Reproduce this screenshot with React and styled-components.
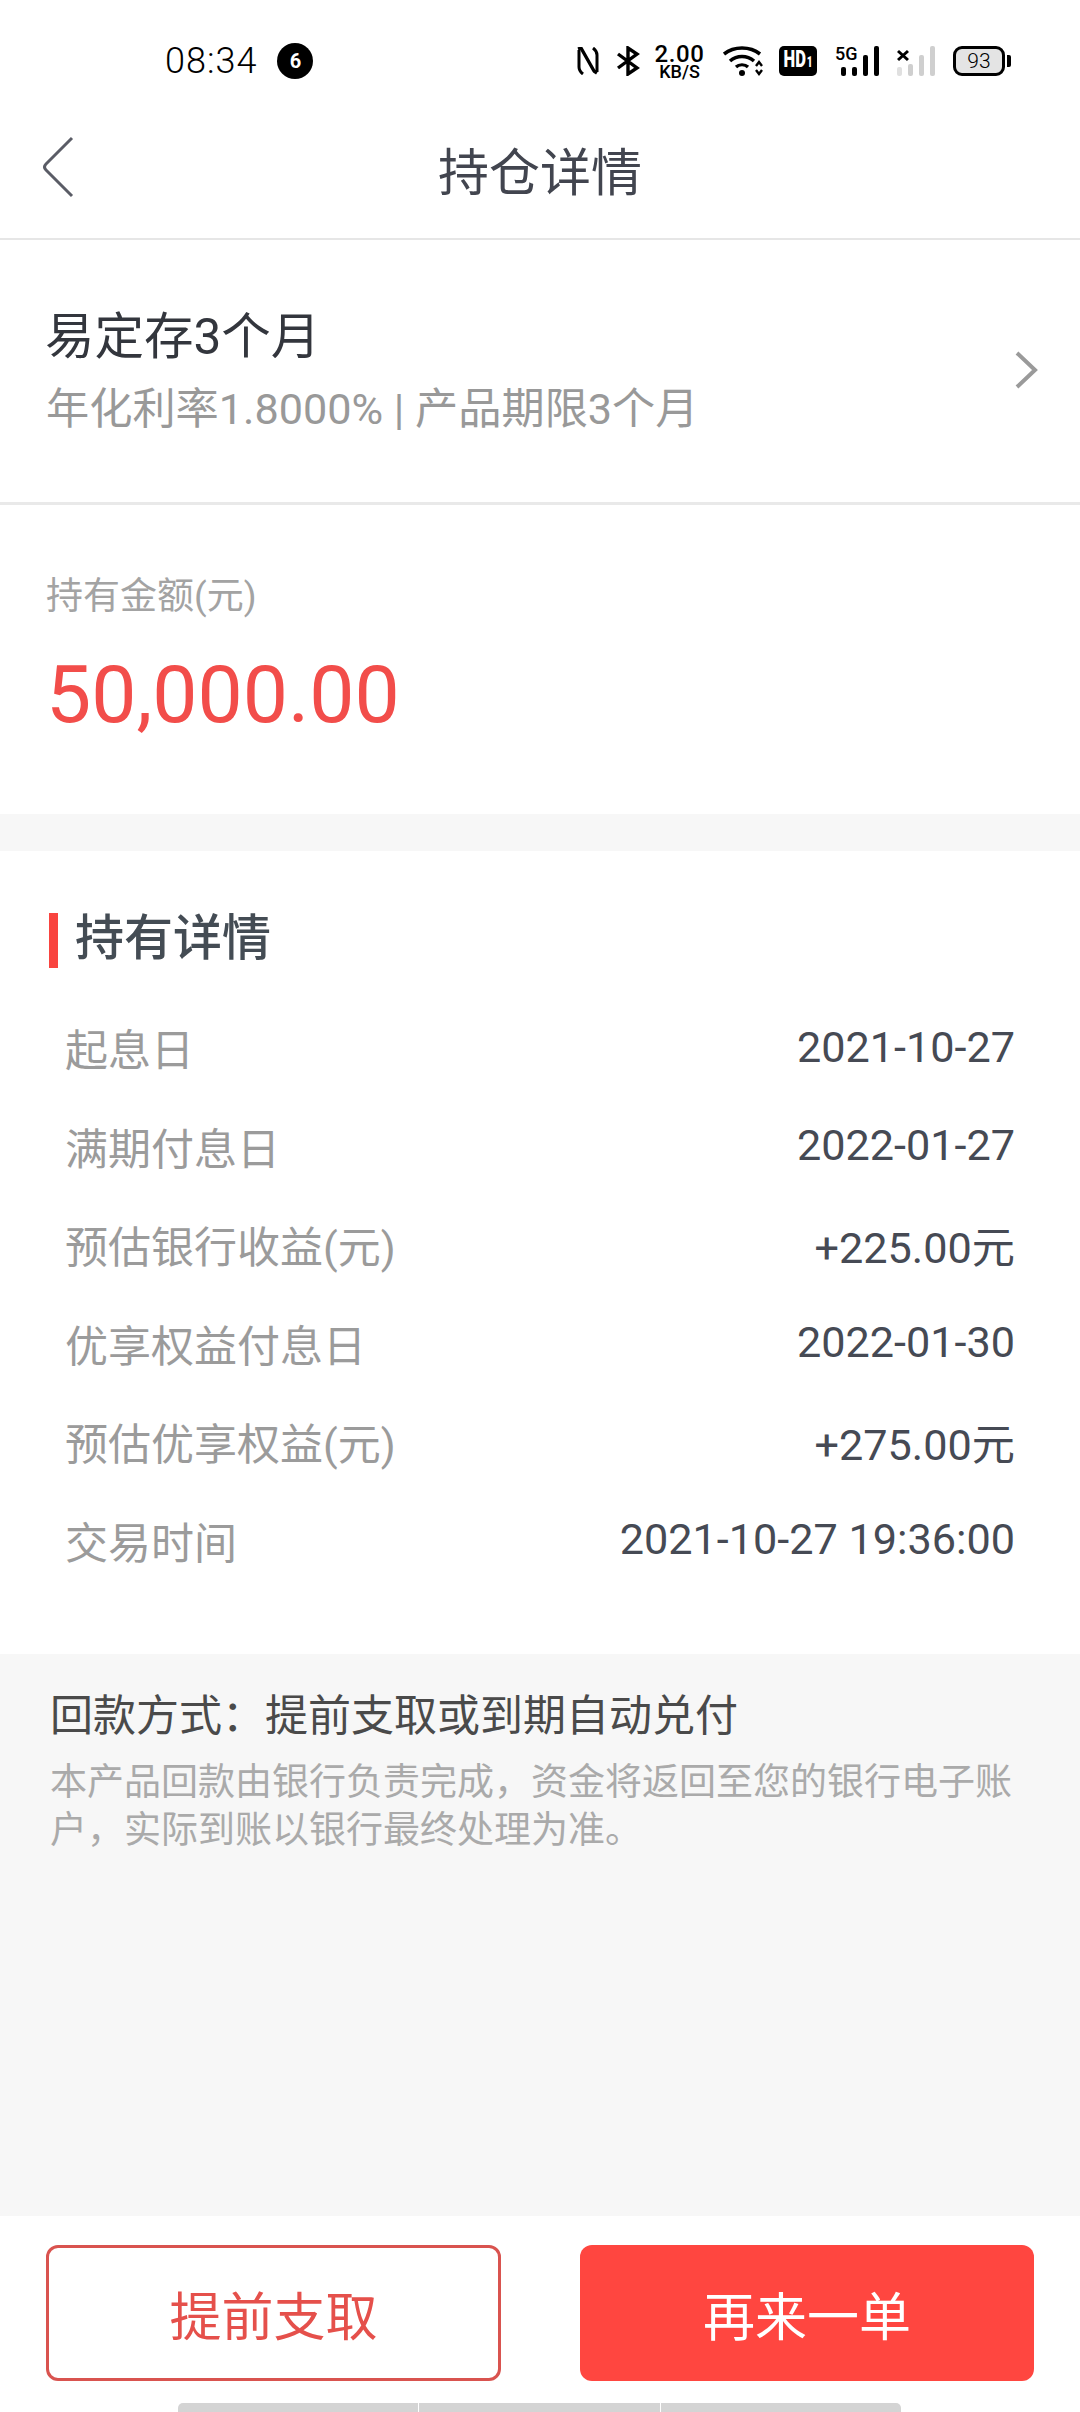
import React from 'react';
import styled, { createGlobalStyle } from 'styled-components';

const GlobalStyle = createGlobalStyle`
  html, body {
    margin: 0;
    padding: 0;
    background: #fff;
  }
  * {
    box-sizing: border-box;
  }
`;

const Page = styled.div`
  width: 1080px;
  height: 2412px;
  display: flex;
  flex-direction: column;
  background: #f7f7f7;
  font-family: Roboto, "Noto Sans CJK SC", sans-serif;
  overflow: hidden;
`;

const StatusBar = styled.div`
  height: 100px;
  flex: none;
  background: #fff;
  display: flex;
  align-items: center;
  padding: 22px 75px 0 165px;
  color: #000;
`;

const Clock = styled.span`
  font-size: 36px;
  font-weight: 300;
  letter-spacing: 1px;
  line-height: 1;
`;

const Badge = styled.span`
  width: 36px;
  height: 36px;
  margin-left: 20px;
  border-radius: 50%;
  background: #000;
  color: #fff;
  font-size: 20px;
  font-weight: 700;
  display: flex;
  align-items: center;
  justify-content: center;
`;

const StatusIcons = styled.div`
  margin-left: auto;
  display: flex;
  align-items: center;
`;

const NetSpeed = styled.div`
  width: 51px;
  margin: 0 18px 0 14px;
  display: flex;
  flex-direction: column;
  align-items: center;
  b {
    font-size: 24px;
    font-weight: 500;
    letter-spacing: 0.6px;
    line-height: 20px;
  }
  span {
    font-size: 18px;
    font-weight: 500;
    line-height: 15px;
  }
`;

const HdTag = styled.div`
  width: 38px;
  height: 30px;
  margin: 0 18px 0 16px;
  border-radius: 5px;
  background: #000;
  color: #fff;
  display: flex;
  align-items: center;
  justify-content: center;
  overflow: hidden;
`;

const HdText = styled.span`
  display: block;
  font-size: 23px;
  font-weight: 900;
  line-height: 30px;
  white-space: nowrap;
  transform: scaleX(0.72);
  small {
    font-size: 14px;
    margin-left: 1px;
  }
`;

const SignalWrap = styled.div`
  position: relative;
  width: ${(p) => p.$width}px;
  height: 30px;
  margin-right: 18px;
`;

const SignalLabel = styled.span`
  position: absolute;
  left: 0;
  top: -1px;
  font-size: 18px;
  font-weight: 500;
  line-height: 1;
`;

const Battery = styled.div`
  width: 52px;
  height: 30px;
  border: 3px solid #000;
  border-radius: 9px;
  background: #e4e4e4;
  font-size: 21px;
  font-weight: 300;
  display: flex;
  align-items: center;
  justify-content: center;
  position: relative;
  &::after {
    content: '';
    position: absolute;
    right: -9px;
    top: 6px;
    width: 4px;
    height: 12px;
    border-radius: 0 2px 2px 0;
    background: #000;
  }
`;

const NavBar = styled.div`
  position: relative;
  height: 140px;
  flex: none;
  background: #fff;
  border-bottom: 2px solid #e6e6e6;
  display: flex;
  align-items: center;
  justify-content: center;
`;

const BackIcon = styled.svg`
  position: absolute;
  left: 40px;
  top: 36px;
  width: 40px;
  height: 66px;
`;

const NavTitle = styled.h1`
  margin: 0;
  font-size: 51px;
  font-weight: 400;
  color: #42454f;
`;

const Product = styled.div`
  height: 265px;
  flex: none;
  background: #fff;
  border-bottom: 3px solid #e9e9e9;
  padding: 67px 40px 0 45px;
  display: flex;
  justify-content: space-between;
`;

const ProductName = styled.div`
  font-size: 49.5px;
  line-height: 60px;
  color: #33363d;
`;

const ProductMeta = styled.div`
  font-size: 43.2px;
  line-height: 60px;
  margin-top: 13px;
  margin-left: 1px;
  color: #999;
`;

const ChevronIcon = styled.svg`
  width: 26px;
  height: 40px;
  margin-top: 43px;
`;

const Holding = styled.div`
  height: 309px;
  flex: none;
  background: #fff;
  padding: 68px 46px 0;
`;

const HoldingLabel = styled.div`
  font-size: 37px;
  line-height: 48px;
  color: #a3a3a3;
`;

const HoldingValue = styled.div`
  margin-top: 24px;
  font-size: 80.5px;
  line-height: 100px;
  color: #f24d4a;
`;

const Details = styled.div`
  height: 803px;
  flex: none;
  margin-top: 37px;
  background: #fff;
  padding: 62px 65px 0 49px;
`;

const SectionTitle = styled.h2`
  margin: 0 0 30px;
  padding-left: 17px;
  height: 55px;
  border-left: 9px solid #f9443f;
  font-size: 49px;
  font-weight: 500;
  line-height: 52px;
  color: #444c54;
`;

const Row = styled.div`
  height: 98.5px;
  padding: 0 0 0 16px;
  display: flex;
  align-items: center;
  justify-content: space-between;
`;

const RowLabel = styled.span`
  font-size: 43px;
  color: #9b9b9b;
`;

const RowValue = styled.span`
  font-size: 43.2px;
  color: #464a54;
`;

const Note = styled.div`
  flex: 1;
  padding: 36px 34px 0 50px;
`;

const NoteTitle = styled.div`
  font-size: 43px;
  line-height: 52px;
  color: #4a4a4a;
`;

const NoteText = styled.div`
  margin-top: 17px;
  font-size: 37px;
  line-height: 48px;
  color: #aaa;
`;

const Footer = styled.div`
  position: relative;
  height: 196px;
  flex: none;
  background: #fff;
  padding: 29px 46px 0;
  display: flex;
  justify-content: space-between;
  align-items: flex-start;
`;

const Button = styled.div`
  width: ${(p) => (p.$solid ? '454px' : '455px')};
  height: 136px;
  border-radius: 12px;
  border: ${(p) => (p.$solid ? 'none' : '3px solid #d9534f')};
  background: ${(p) => (p.$solid ? '#ff4640' : '#fff')};
  color: ${(p) => (p.$solid ? '#fff' : '#e5504b')};
  font-size: 52px;
  display: flex;
  align-items: center;
  justify-content: center;
`;

const HomeBar = styled.div`
  position: absolute;
  left: 178px;
  right: 179px;
  bottom: 0;
  height: 9px;
  border-radius: 5px 5px 0 0;
  display: flex;
  gap: 1px;
  overflow: hidden;
`;

const HomeSegment = styled.span`
  flex: 1;
  background: #d4d4d4;
`;

const details = [
  ['起息日', '2021-10-27'],
  ['满期付息日', '2022-01-27'],
  ['预估银行收益(元)', '+225.00元'],
  ['优享权益付息日', '2022-01-30'],
  ['预估优享权益(元)', '+275.00元'],
  ['交易时间', '2021-10-27 19:36:00'],
];

const NfcIcon = () => (
  <svg width="22" height="28" viewBox="0 0 22 28" fill="none" stroke="#000" strokeWidth="3">
    <path d="M2 3V20Q2 24 6 27" />
    <path d="M20 25V8Q20 4 16 1" />
    <path d="M1 2 4 1 17 24 20 26" strokeLinejoin="round" strokeWidth="3.4" />
  </svg>
);

const BluetoothIcon = () => (
  <svg width="24" height="30" viewBox="0 0 24 30" fill="none" stroke="#000" strokeWidth="3.4" style={{ marginLeft: 17 }}>
    <path d="M2 8 21 22 12 28V2L21 8 2 22" />
  </svg>
);

const WifiIcon = () => (
  <svg width="40" height="30" viewBox="0 0 40 30" fill="none" stroke="#000">
    <path d="M1 8C11 0 27 0 37 8" strokeWidth="3.6" />
    <path d="M7 15C14 9 24 9 31 15" strokeWidth="3.6" />
    <path d="M13 21C16 18 22 18 25 21" strokeWidth="3.2" />
    <circle cx="19" cy="27" r="3" fill="#000" stroke="none" />
    <path d="M33 20 36 16 39 20" strokeWidth="2.4" />
    <path d="M33 24 36 28 39 24" strokeWidth="2.4" />
  </svg>
);

const SignalBars = ({ x, color, firstColor, heights, crossed }) => (
  <svg width="44" height="30" viewBox="0 0 44 30" style={{ display: 'block' }}>
    {heights.map((h, i) => (
      <rect key={i} x={x + i * 11} y={30 - h} width="5" height={h} rx="2" fill={i === 0 ? firstColor : color} />
    ))}
    {crossed && <path d="M1 5 11 14M11 5 1 14" stroke="#000" strokeWidth="3" />}
  </svg>
);

const BackArrow = () => (
  <BackIcon viewBox="0 0 40 66" fill="none" stroke="#5a5c66" strokeWidth="3">
    <path d="M32 2 6 28q-3 3 0 6l26 26" />
  </BackIcon>
);

const Chevron = () => (
  <ChevronIcon viewBox="0 0 26 40" fill="none" stroke="#9a9a9a" strokeWidth="4">
    <path d="M3 3l18 17L3 37" />
  </ChevronIcon>
);

const App = () => (
  <Page>
    <GlobalStyle />
    <StatusBar>
      <Clock>08:34</Clock>
      <Badge>6</Badge>
      <StatusIcons>
        <NfcIcon />
        <BluetoothIcon />
        <NetSpeed>
          <b>2.00</b>
          <span>KB/S</span>
        </NetSpeed>
        <WifiIcon />
        <HdTag>
          <HdText>HD<small>1</small></HdText>
        </HdTag>
        <SignalWrap $width={44}>
          <SignalLabel>5G</SignalLabel>
          <SignalBars x={6} color="#000" firstColor="#000" heights={[9, 9, 21, 30]} />
        </SignalWrap>
        <SignalWrap $width={38}>
          <SignalBars x={0} color="#cfcfcf" firstColor="#e0e0e0" heights={[9, 12, 21, 30]} crossed />
        </SignalWrap>
        <Battery>93</Battery>
      </StatusIcons>
    </StatusBar>
    <NavBar>
      <BackArrow />
      <NavTitle>持仓详情</NavTitle>
    </NavBar>
    <Product>
      <div>
        <ProductName>易定存3个月</ProductName>
        <ProductMeta>年化利率1.8000% | 产品期限3个月</ProductMeta>
      </div>
      <Chevron />
    </Product>
    <Holding>
      <HoldingLabel>持有金额(元)</HoldingLabel>
      <HoldingValue>50,000.00</HoldingValue>
    </Holding>
    <Details>
      <SectionTitle>持有详情</SectionTitle>
      {details.map(([label, value]) => (
        <Row key={label}>
          <RowLabel>{label}</RowLabel>
          <RowValue>{value}</RowValue>
        </Row>
      ))}
    </Details>
    <Note>
      <NoteTitle>回款方式：提前支取或到期自动兑付</NoteTitle>
      <NoteText>本产品回款由银行负责完成，资金将返回至您的银行电子账户，实际到账以银行最终处理为准。</NoteText>
    </Note>
    <Footer>
      <Button>提前支取</Button>
      <Button $solid>再来一单</Button>
      <HomeBar>
        <HomeSegment />
        <HomeSegment />
        <HomeSegment />
      </HomeBar>
    </Footer>
  </Page>
);

export default App;
